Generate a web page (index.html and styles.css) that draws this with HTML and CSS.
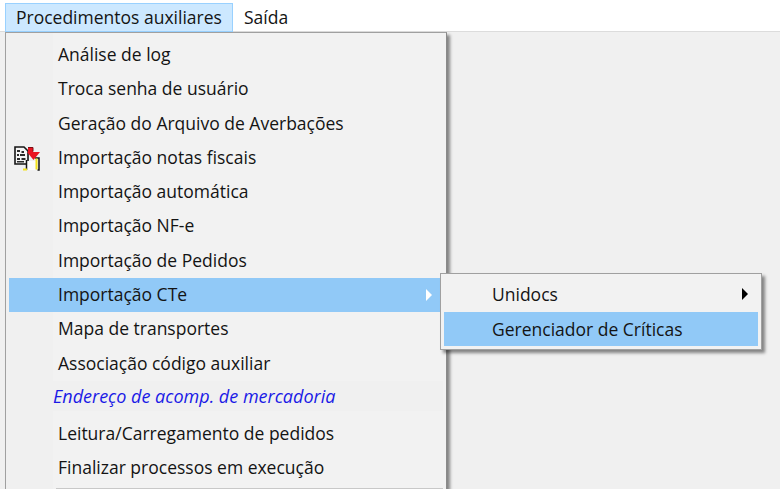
FILE: index.html
```html
<!DOCTYPE html>
<html lang="pt">
<head>
<meta charset="utf-8">
<title>Menu</title>
<link rel="stylesheet" href="styles.css">
</head>
<body>
<nav class="menubar">
  <div class="top-item top-item-open">Procedimentos auxiliares</div>
  <div class="top-item">Saída</div>
</nav>
<main class="workspace">
  <div class="menu">
    <div class="gutter"></div>
    <ul class="menu-list">
      <li class="item">Análise de log</li>
      <li class="item">Troca senha de usuário</li>
      <li class="item">Geração do Arquivo de Averbações</li>
      <li class="item item-icon">
        <svg class="icon" width="28" height="28" viewBox="0 0 28 28">
          <path d="M1 4h9l4 4v13H1z" fill="#f4f4f4" stroke="#161616" stroke-width="1.600"/>
          <path d="M3 7h3v2H3zM7.500 8h2.500v2H7.500zM3 11h2v2H3zM6 11h5v2H6zM3 15h3v2H3zM7.500 15h4v2h-4zM3 18h7v1.500H3z" fill="#2a2a2a"/>
          <path d="M13 18h9v9h-9z" fill="#fdfdfd"/>
          <path d="M12.500 17v10" stroke="#141414" stroke-width="1.500"/>
          <path d="M9 26.500h4" stroke="#f3e31c" stroke-width="2"/>
          <path d="M21 15h4v12h-1.500" fill="none" stroke="#141414" stroke-width="1.500"/>
          <path d="M22.500 15.500v11" stroke="#f3e31c" stroke-width="2"/>
          <path d="M14 4h5v5h7l-6.500 8-6.500-8h1z" fill="#ea1420"/>
          <path d="M14 4.500h5v4" fill="none" stroke="#7a0f14" stroke-width="1"/>
        </svg>
        Importação notas fiscais
      </li>
      <li class="item">Importação automática</li>
      <li class="item">Importação NF-e</li>
      <li class="item">Importação de Pedidos</li>
      <li class="item item-active">Importação CTe<span class="arrow arrow-white"></span></li>
      <li class="item">Mapa de transportes</li>
      <li class="item">Associação código auxiliar</li>
      <li class="item item-link">Endereço de acomp. de mercadoria</li>
      <li class="item item-after-link">Leitura/Carregamento de pedidos</li>
      <li class="item">Finalizar processos em execução</li>
      <li class="separator"></li>
    </ul>
  </div>
  <div class="submenu">
    <ul class="submenu-list">
      <li class="sub-item">Unidocs<span class="arrow arrow-black"></span></li>
      <li class="sub-item sub-item-active">Gerenciador de Críticas</li>
    </ul>
  </div>
</main>
</body>
</html>
```
FILE: styles.css
```css
* { box-sizing: border-box; }
html, body { margin: 0; height: 100%; overflow: hidden; }
body {
  width: 780px;
  height: 489px;
  display: flex;
  flex-direction: column;
  background: #f0f0f0;
  font-family: "Open Sans", "Noto Sans", sans-serif;
  font-size: 17.5px;
  color: #141414;
}
.menubar {
  display: flex;
  height: 32px;
  padding: 3px 0 0 5px;
  background: #fff;
  border-bottom: 1px solid #dcdcdc;
}
.top-item {
  padding: 0 10px;
  line-height: 27px;
  height: 29px;
  border: 1px solid transparent;
}
.top-item-open {
  width: 228px;
  background: #cce8ff;
  border-color: #99d1ff;
}
.workspace { position: relative; flex: 1; }
.menu {
  position: absolute;
  left: 5px;
  top: 0;
  width: 442px;
  height: 480px;
  background: #f2f2f2;
  border: 1px solid #a0a0a0;
  border-right-color: #8a8a8a;
  box-shadow: 3px 3px 3px rgba(0, 0, 0, .45);
}
.gutter {
  position: absolute;
  left: 0;
  top: 0;
  bottom: 0;
  width: 47px;
  background: #f0f0f0;
}
ul { list-style: none; margin: 0; padding: 0; }
.menu-list { position: relative; padding: 5px 3px 0; }
.item {
  position: relative;
  height: 34.3px;
  line-height: 33px;
  padding-left: 49px;
  white-space: nowrap;
}
.icon { position: absolute; left: 5px; top: 2px; }
.item-active { background: #91c9f7; }
.item-link {
  height: 30px;
  line-height: 30px;
  font-style: italic;
  font-size: 18px;
  color: #1a1ae6;
  padding-left: 44px;
  background: #f0f0f0;
}
.item-after-link { margin-top: 6px; }
.separator { height: 1px; margin: 2px 0 0 47px; background: #c8c8c8; }
.arrow {
  position: absolute;
  top: 50%;
  margin-top: -6px;
  width: 0;
  height: 0;
  border-style: solid;
  border-width: 6px 0 6px 6px;
  border-color: transparent;
}
.arrow-white { right: 11px; border-left-color: #fff; }
.arrow-black { right: 10px; border-left-color: #000; }
.submenu {
  position: absolute;
  left: 440px;
  top: 241px;
  width: 322px;
  height: 77px;
  padding: 3px;
  background: #f2f2f2;
  border: 1px solid #a0a0a0;
  box-shadow: 3px 3px 3px rgba(0, 0, 0, .45);
}
.sub-item {
  position: relative;
  height: 34.5px;
  line-height: 34px;
  padding-left: 48px;
  white-space: nowrap;
}
.sub-item-active { background: #91c9f7; }
```
